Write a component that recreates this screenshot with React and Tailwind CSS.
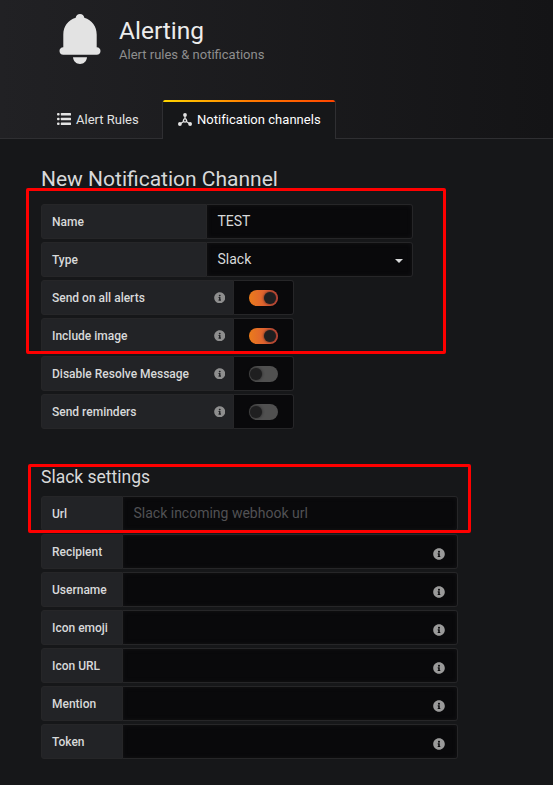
import React from "react";
import { FaInfoCircle } from "react-icons/fa";

function Bell() {
  return (
    <svg width="42" height="51" viewBox="0 0 42 51" className="shrink-0" fill="#e3e3e3">
      <path d="M21 0c-2.300 0-4 1.600-4.300 3.800C9 6 4.300 12.500 4.300 20.500V33.300C1.800 33.400.5 35 .5 37c0 2.200 1.500 3.800 3.800 3.800h33.400c2.300 0 3.800-1.600 3.800-3.800 0-2-1.300-3.600-3.800-3.700V20.500C37.700 12.500 33 6 25.300 3.800 25 1.600 23.300 0 21 0Z" />
      <path d="M14 43.300h14c-.4 4-3.200 6.700-7 6.700s-6.600-2.700-7-6.700Z" />
    </svg>
  );
}

function ListIcon() {
  return (
    <svg width="14" height="12" viewBox="0 0 14 12" className="-mt-[2px]" fill="#e3e3e3">
      {[0, 4.700, 9.400].map((y) => (
        <g key={y}>
          <rect x="0" y={y} width="2.600" height="2.600" rx="1" />
          <rect x="3.800" y={y} width="10.200" height="2.600" rx=".5" />
        </g>
      ))}
    </svg>
  );
}

function ChannelIcon() {
  return (
    <svg width="14" height="13" viewBox="0 0 14 13" className="-mt-px" fill="#e3e3e3" stroke="#e3e3e3">
      <path d="M7 2v5.500M7 7.500L2 11M7 7.500L12 11" strokeWidth="1.300" fill="none" />
      <g stroke="none">
        <circle cx="7" cy="1.900" r="1.900" />
        <circle cx="7" cy="7.500" r="2.200" />
        <circle cx="1.900" cy="11" r="1.900" />
        <circle cx="12.100" cy="11" r="1.900" />
      </g>
      <circle cx="7" cy="7.500" r=".9" fill="#161719" stroke="none" />
    </svg>
  );
}

function Row({ label, labelWidth, info, children }) {
  return (
    <div className="flex h-[35px]">
      <div className={`${labelWidth} flex shrink-0 items-center justify-between rounded-l-[3px] border border-[#262628] bg-[#222326] pr-[8px] pl-[10px] text-[12px] font-medium text-[#d8d9da]`}>
        <span>{label}</span>
        {info && <FaInfoCircle size={11.5} className="text-[#8e8e8e]" />}
      </div>
      {children}
    </div>
  );
}

function Field({ width, children }) {
  return (
    <div className={`${width} flex items-center justify-between rounded-r-[3px] border border-l-0 border-[#262628] bg-[#09090b] pl-[10.5px] text-[14px] text-[#d8d9da] shadow-[inset_0_0_4px_#141416]`}>
      {children}
    </div>
  );
}

function Toggle({ on }) {
  return (
    <div className="flex w-[60px] items-center rounded-r-[3px] border border-l-0 border-[#262628] bg-[#09090b] pl-[15px]">
      {on ? (
        <div className="flex h-4 w-[29px] items-center justify-end rounded-full bg-linear-to-r from-[#eb7b18] to-[#d44a3a] pr-[2px]">
          <div className="size-[12px] rounded-full bg-[#1f1f20] shadow-[0_0_3px_#1f1f20]" />
        </div>
      ) : (
        <div className="flex h-4 w-[29px] items-center rounded-full bg-[#505050] pl-[1px]">
          <div className="size-[12px] rounded-full bg-[#1f1f20] shadow-[0_0_3px_#1f1f20]" />
        </div>
      )}
    </div>
  );
}

const toggles = [
  ["Send on all alerts", true],
  ["Include image", true],
  ["Disable Resolve Message", false],
  ["Send reminders", false],
];

const optional = ["Recipient", "Username", "Icon emoji", "Icon URL", "Mention", "Token"];

export default function App() {
  return (
    <div className="relative h-[785px] w-[553px] overflow-hidden bg-[#161719] font-[Roboto,sans-serif] text-[#d8d9da]">
      <header className="flex h-[139px] flex-col justify-between border-b border-[#2f2f32] bg-linear-to-r from-[#212124] to-[#141416]">
        <div className="flex pt-[14px] pl-[59px]">
          <Bell />
          <div className="pt-px pl-[18px]">
            <h1 className="text-[24.500px] leading-[31px] text-[#ececec]">Alerting</h1>
            <p className="text-[13px] leading-[18px] text-[#8e8e8e]">Alert rules &amp; notifications</p>
          </div>
        </div>
        <nav className="-mb-px flex h-[39px] pl-[57px] text-[13px] text-[#e3e3e3]">
          <div className="flex w-[105px] items-center gap-[5px]">
            <ListIcon />
            <span>Alert Rules</span>
          </div>
          <div className="flex w-[174px] flex-col overflow-hidden rounded-t-[3px] border-x border-[#2f2f32] bg-[#161719]">
            <div className="h-[2px] shrink-0 bg-linear-to-r from-[#ffd500] via-[#ff7a00] to-[#ff4400]" />
            <div className="flex grow items-center gap-[5px] pb-[2px] pl-[15px] text-white">
              <ChannelIcon />
              <span className="tracking-[0.03px]">Notification channels</span>
            </div>
          </div>
        </nav>
      </header>

      <main className="pl-[41px]">
        <h2 className="pt-[26px] text-[21px] leading-[28px]">New Notification Channel</h2>
        <div className="flex flex-col gap-[3px] pt-[11px]">
          <Row label="Name" labelWidth="w-[166px]">
            <Field width="w-[206px]">TEST</Field>
          </Row>
          <Row label="Type" labelWidth="w-[166px]">
            <Field width="w-[206px]">
              <span>Slack</span>
              <svg width="8" height="4" viewBox="0 0 8 4" className="mt-[3px] mr-[9px]" fill="#d8d9da">
                <path d="M0 0h8L4 4Z" />
              </svg>
            </Field>
          </Row>
          {toggles.map(([label, on]) => (
            <Row key={label} label={label} labelWidth="w-[193px]" info>
              <Toggle on={on} />
            </Row>
          ))}
        </div>

        <h3 className="pt-[36px] text-[17.500px] leading-[24px]">Slack settings</h3>
        <div className="flex flex-col gap-[3px] pt-[7px]">
          <Row label="Url" labelWidth="w-[82px]">
            <Field width="w-[335px]">
              <span className="text-[#515154]">Slack incoming webhook url</span>
            </Field>
          </Row>
          {optional.map((label) => (
            <Row key={label} label={label} labelWidth="w-[82px]">
              <Field width="w-[335px]">
                <span />
                <FaInfoCircle size={12} className="mt-[4px] mr-[12px] text-[#9a9a9a]" />
              </Field>
            </Row>
          ))}
        </div>
      </main>

      <div className="absolute top-[188px] left-[26px] h-[166px] w-[420px] rounded-[2px] border-3 border-[#ff0000]" />
      <div className="absolute top-[464px] left-[28px] h-[69px] w-[443px] rounded-[2px] border-3 border-[#ff0000]" />
    </div>
  );
}
